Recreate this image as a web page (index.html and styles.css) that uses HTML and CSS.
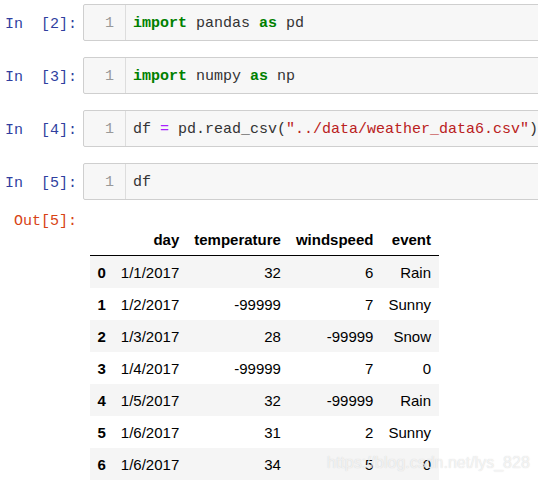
FILE: index.html
```html
<!DOCTYPE html>
<html>
<head>
<meta charset="utf-8">
<link rel="stylesheet" href="styles.css">
</head>
<body>
<div class="notebook">
  <div class="cell">
    <div class="prompt in">In&nbsp;&nbsp;[2]:</div>
    <div class="input">
      <div class="gutter">1</div>
      <div class="code"><span class="kw">import</span> pandas <span class="kw">as</span> pd</div>
    </div>
  </div>
  <div class="cell">
    <div class="prompt in">In&nbsp;&nbsp;[3]:</div>
    <div class="input">
      <div class="gutter">1</div>
      <div class="code"><span class="kw">import</span> numpy <span class="kw">as</span> np</div>
    </div>
  </div>
  <div class="cell">
    <div class="prompt in">In&nbsp;&nbsp;[4]:</div>
    <div class="input">
      <div class="gutter">1</div>
      <div class="code">df <span class="op">=</span> pd.read_csv(<span class="str">"../data/weather_data6.csv"</span>)</div>
    </div>
  </div>
  <div class="cell">
    <div class="prompt in">In&nbsp;&nbsp;[5]:</div>
    <div class="input">
      <div class="gutter">1</div>
      <div class="code">df</div>
    </div>
  </div>
  <div class="output">
    <div class="prompt out">Out[5]:</div>
    <div class="subarea">
      <table class="frame">
        <thead>
          <tr><th></th><th>day</th><th>temperature</th><th>windspeed</th><th>event</th></tr>
        </thead>
        <tbody>
          <tr><th>0</th><td>1/1/2017</td><td>32</td><td>6</td><td>Rain</td></tr>
          <tr><th>1</th><td>1/2/2017</td><td>-99999</td><td>7</td><td>Sunny</td></tr>
          <tr><th>2</th><td>1/3/2017</td><td>28</td><td>-99999</td><td>Snow</td></tr>
          <tr><th>3</th><td>1/4/2017</td><td>-99999</td><td>7</td><td>0</td></tr>
          <tr><th>4</th><td>1/5/2017</td><td>32</td><td>-99999</td><td>Rain</td></tr>
          <tr><th>5</th><td>1/6/2017</td><td>31</td><td>2</td><td>Sunny</td></tr>
          <tr><th>6</th><td>1/6/2017</td><td>34</td><td>5</td><td>0</td></tr>
        </tbody>
      </table>
    </div>
  </div>
  <div class="watermark">https://blog.csdn.net/lys_828</div>
</div>
</body>
</html>
```

FILE: styles.css
```css
html, body {
  margin: 0;
  padding: 0;
  overflow: hidden;
  background: #fff;
}
.notebook {
  position: relative;
  padding-top: 4px;
  width: 538px;
  height: 487px;
  overflow: hidden;
}
.cell {
  display: flex;
  align-items: center;
  margin-bottom: 16px;
}
.prompt {
  width: 77px;
  padding-right: 6px;
  flex-shrink: 0;
  text-align: right;
  font-family: "Liberation Mono", monospace;
  font-size: 15px;
  line-height: 17px;
}
.cell .prompt {
  padding-top: 3px;
}
.prompt.in { color: #303f9f; }
.prompt.out { color: #d84315; }
.input {
  display: flex;
  flex-shrink: 0;
  width: 490px;
  border: 1px solid #cfcfcf;
  border-radius: 2px;
  background: #f7f7f7;
  font-family: "Liberation Mono", monospace;
  font-size: 15px;
  line-height: 17px;
}
.gutter {
  width: 30px;
  padding: 10px 11px 8px 0;
  text-align: right;
  color: #999;
  border-right: 1px solid #ddd;
}
.code {
  padding: 10px 0 8px 7px;
  color: #333;
  white-space: pre;
}
.kw { color: #008000; font-weight: bold; }
.op { color: #aa22ff; }
.str { color: #ba2121; }
.output {
  display: flex;
  margin-top: -4px;
}
.output .prompt {
  padding-top: 1px;
  align-self: flex-start;
}
.subarea {
  padding-left: 7px;
  padding-top: 12px;
}
.frame {
  border-collapse: collapse;
  border-spacing: 0;
  font-family: "Liberation Sans", Arial, sans-serif;
  font-size: 15px;
  line-height: 17px;
  color: #000;
}
.frame th, .frame td {
  padding: 7.5px 7.5px;
  text-align: right;
  vertical-align: middle;
  white-space: nowrap;
}
.frame thead th {
  font-weight: bold;
  padding: 7px 7.5px;
  border-bottom: 1px solid #000;
}
.frame tbody th {
  font-weight: bold;
}
.frame tbody tr:nth-child(odd) {
  background: #f5f5f5;
}
.watermark {
  position: absolute;
  left: 327px;
  top: 454px;
  font-family: "Liberation Sans", Arial, sans-serif;
  font-size: 16px;
  color: rgba(255, 255, 255, 0.7);
  text-shadow: 0 0 1px rgba(140, 140, 140, 0.4);
  white-space: nowrap;
}
```
